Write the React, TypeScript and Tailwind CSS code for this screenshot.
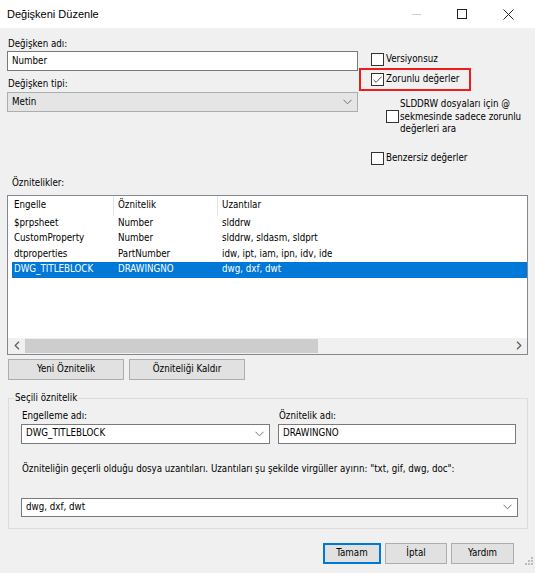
import React from "react";

function Box({ checked }: { checked?: boolean }) {
  return (
    <span className="w-[13px] h-[13px] border border-[#333333] bg-white shrink-0 flex items-center justify-center">
      {checked && (
        <svg width="11" height="11" viewBox="0 0 11 11">
          <path d="M1.5 5.8 L4.2 8.3 L9.6 2.6" stroke="#555" strokeWidth="1" fill="none" />
        </svg>
      )}
    </span>
  );
}

function ChevronDown() {
  return (
    <svg width="9" height="6" viewBox="0 0 9 6">
      <path d="M0.5 0.8 L4.5 4.8 L8.5 0.8" stroke="#707070" strokeWidth="1" fill="none" />
    </svg>
  );
}

function ChevronLeft() {
  return (
    <svg width="6" height="9" viewBox="0 0 6 9">
      <path d="M5 0.8 L1.2 4.5 L5 8.2" stroke="#606060" strokeWidth="1.3" fill="none" />
    </svg>
  );
}

function ChevronRight() {
  return (
    <svg width="6" height="9" viewBox="0 0 6 9">
      <path d="M1 0.8 L4.8 4.5 L1 8.2" stroke="#606060" strokeWidth="1.3" fill="none" />
    </svg>
  );
}

const rows = [
  ["$prpsheet", "Number", "slddrw"],
  ["CustomProperty", "Number", "slddrw, sldasm, sldprt"],
  ["dtproperties", "PartNumber", "idw, ipt, iam, ipn, idv, ide"],
  ["DWG_TITLEBLOCK", "DRAWINGNO", "dwg, dxf, dwt"],
];

export default function App() {
  return (
    <div className="w-[535px] h-[573px] bg-[#f0f0f0] overflow-hidden text-black text-[9.7px] font-['DejaVu_Sans_Condensed','DejaVu_Sans',sans-serif] flex flex-col">
      {/* Title bar */}
      <div className="h-[28px] bg-white flex items-center shrink-0">
        <div className="pl-[7px] text-[11px] font-['Liberation_Sans',Arial,sans-serif] flex-1">
          Değişkeni Düzenle
        </div>
        <div className="flex items-center h-full">
          <div className="w-[46px] h-full flex items-center justify-center">
            <div className="w-[9px] h-[1px] bg-[#cfcfcf]" />
          </div>
          <div className="w-[46px] h-full flex items-center justify-center">
            <div className="w-[10px] h-[10px] border border-[#222]" />
          </div>
          <div className="w-[46px] h-full flex items-center justify-center mr-[4px]">
            <svg width="11" height="11" viewBox="0 0 11 11">
              <path d="M0.5 0.5 L10.5 10.5 M10.5 0.5 L0.5 10.5" stroke="#222" strokeWidth="1" />
            </svg>
          </div>
        </div>
      </div>

      {/* Top section */}
      <div className="flex pl-[7px] pt-[9px]">
        <div className="w-[351px]">
          <div className="h-[14px] leading-[14px] pl-[1px]">Değişken adı:</div>
          <div className="h-[20px] bg-white border border-[#7a7a7a] flex items-center pl-[4px]">Number</div>
          <div className="mt-[6px] h-[14px] leading-[14px] pl-[1px]">Değişken tipi:</div>
          <div className="mt-[1px] h-[20px] bg-[#e5e5e5] border border-[#adadad] flex items-center justify-between pl-[4px] pr-[5px]">
            <span>Metin</span>
            <ChevronDown />
          </div>
        </div>
        <div className="ml-[13px] pt-[16px]">
          <div className="flex items-center h-[13px] gap-[2px]">
            <Box />
            <span>Versiyonsuz</span>
          </div>
          <div className="relative mt-[7px] flex items-center h-[13px] gap-[2px]">
            <Box checked />
            <span>Zorunlu değerler</span>
            <div className="absolute left-[-12px] top-[-5px] w-[112px] h-[23px] border-2 border-[#ee1c1c]" />
          </div>
          <div className="mt-[12px] ml-[15px] flex items-center gap-[1px]">
            <Box />
            <div className="leading-[12.5px] whitespace-nowrap">
              SLDDRW dosyaları için @
              <br />
              sekmesinde sadece zorunlu
              <br />
              değerleri ara
            </div>
          </div>
          <div className="mt-[16px] flex items-center h-[13px] gap-[2px]">
            <Box />
            <span>Benzersiz değerler</span>
          </div>
        </div>
      </div>

      {/* Attributes label */}
      <div className="mt-[11px] pl-[12px] h-[14px] leading-[14px]">Öznitelikler:</div>

      {/* List */}
      <div className="mt-[5px] ml-[7px] w-[521px] h-[160px] bg-white border border-[#828790] flex flex-col">
        <div className="h-[20px] flex items-stretch shrink-0">
          <div className="w-[106px] pl-[6px] border-r border-[#e5e5e5] flex items-center">Engelle</div>
          <div className="w-[104px] pl-[4px] border-r border-[#e5e5e5] flex items-center">Öznitelik</div>
          <div className="pl-[4px] flex items-center">Uzantılar</div>
        </div>
        {rows.map((r, i) => {
          const sel = i === 3;
          return (
            <div
              key={i}
              className={
                "ml-[4px] h-[15.5px] flex items-center shrink-0 " +
                (sel ? "bg-[#0078d7] text-white" : "")
              }
            >
              <div className="w-[102px] pl-[2px]">{r[0]}</div>
              <div className="w-[104px] pl-[4px]">{r[1]}</div>
              <div className="pl-[4px]">{r[2]}</div>
            </div>
          );
        })}
        <div className="flex-1" />
        <div className="h-[16px] bg-[#f0f0f0] flex items-center shrink-0">
          <div className="w-[17px] h-full flex items-center justify-center">
            <ChevronLeft />
          </div>
          <div className="w-[293px] h-[14px] bg-[#cdcdcd]" />
          <div className="flex-1" />
          <div className="w-[17px] h-full flex items-center justify-center">
            <ChevronRight />
          </div>
        </div>
      </div>

      {/* Buttons */}
      <div className="mt-[4px] ml-[8px] flex gap-[5px]">
        <div className="w-[116px] h-[21px] bg-[#e1e1e1] border border-[#adadad] flex items-center justify-center">Yeni Öznitelik</div>
        <div className="w-[116px] h-[21px] bg-[#e1e1e1] border border-[#adadad] flex items-center justify-center">Özniteliği Kaldır</div>
      </div>

      {/* Group */}
      <div className="mt-[18px] ml-[8px] w-[520px] h-[131px] border border-[#dcdcdc] pl-[12px]">
        <div className="-mt-[8px] -ml-[7px] px-[1px] w-fit h-[14px] leading-[14px] bg-[#f0f0f0]">Seçili öznitelik</div>
        <div className="mt-[4px] flex gap-[8px]">
          <div className="w-[249px]">
            <div className="h-[14px] leading-[14px] pl-[1px]">Engelleme adı:</div>
            <div className="mt-[1px] h-[20px] bg-white border border-[#7a7a7a] flex items-center justify-between pl-[4px] pr-[5px]">
              <span>DWG_TITLEBLOCK</span>
              <ChevronDown />
            </div>
          </div>
          <div className="w-[238px]">
            <div className="h-[14px] leading-[14px] pl-[1px]">Öznitelik adı:</div>
            <div className="mt-[1px] h-[20px] bg-white border border-[#7a7a7a] flex items-center pl-[4px]">DRAWINGNO</div>
          </div>
        </div>
        <div className="mt-[18px] h-[14px] leading-[14px] pl-[1px]">
          Özniteliğin geçerli olduğu dosya uzantıları. Uzantıları şu şekilde virgüller ayırın: "txt, gif, dwg, doc":
        </div>
        <div className="mt-[22px] w-[497px] h-[19px] bg-white border border-[#7a7a7a] flex items-center justify-between pl-[4px] pr-[5px]">
          <span>dwg, dxf, dwt</span>
          <ChevronDown />
        </div>
      </div>

      {/* Bottom buttons */}
      <div className="mt-[14px] flex justify-end pr-[21px] gap-[4px] relative">
        <div className="w-[58px] h-[21px] bg-[#e1e1e1] border-2 border-[#0078d7] flex items-center justify-center">Tamam</div>
        <div className="w-[62px] h-[21px] bg-[#e1e1e1] border border-[#adadad] flex items-center justify-center">İptal</div>
        <div className="w-[63px] h-[21px] bg-[#e1e1e1] border border-[#adadad] flex items-center justify-center">Yardım</div>
        <svg className="absolute right-[1px] top-[13px]" width="10" height="10" viewBox="0 0 10 10">
          <rect x="7" y="1" width="2" height="2" fill="#bcbcbc" />
          <rect x="4" y="4" width="2" height="2" fill="#bcbcbc" />
          <rect x="7" y="4" width="2" height="2" fill="#bcbcbc" />
          <rect x="1" y="7" width="2" height="2" fill="#bcbcbc" />
          <rect x="4" y="7" width="2" height="2" fill="#bcbcbc" />
          <rect x="7" y="7" width="2" height="2" fill="#bcbcbc" />
        </svg>
      </div>
    </div>
  );
}
